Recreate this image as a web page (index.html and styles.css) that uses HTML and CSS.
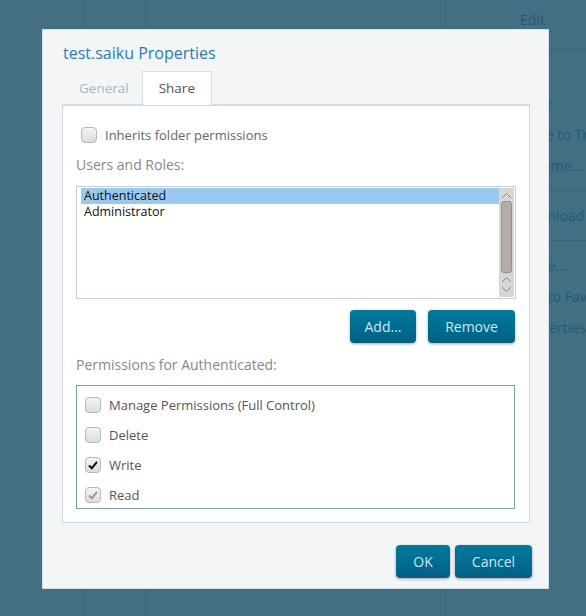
FILE: index.html
```html
<!DOCTYPE html>
<html>
<head>
    <title>test.saiku Properties</title>
    <link rel="stylesheet" href="styles.css">
</head>
<body>
    <div class="app">
        <div class="col col-a"></div>
        <div class="col col-b"></div>
        <div class="col col-c"></div>
        <div class="menu">
            <div class="menu-head">Edit</div>
            <div class="menu-group first">
                <div class="menu-item">Copy</div>
                <div class="menu-item">Move to Trash</div>
                <div class="menu-item">Rename...</div>
            </div>
            <div class="menu-group">
                <div class="menu-item">Download</div>
            </div>
            <div class="menu-group">
                <div class="menu-item">Share...</div>
                <div class="menu-item">Add to Favorites</div>
                <div class="menu-item">Properties</div>
            </div>
        </div>
    </div>

    <div class="dialog">
        <h1 class="title">test.saiku Properties</h1>
        <div class="tabs">
            <div class="tab">General</div>
            <div class="tab active">Share</div>
        </div>
        <div class="panel">
            <label class="check-row inherit">
                <span class="box"></span>Inherits folder permissions
            </label>
            <div class="caption">Users and Roles:</div>
            <div class="listbox">
                <div class="items">
                    <div class="item selected">Authenticated</div>
                    <div class="item">Administrator</div>
                </div>
                <div class="scrollbar">
                    <svg class="arrow" width="11" height="7" viewBox="0 0 11 7"><path d="M1 6 L5.5 1.5 L10 6" fill="none" stroke="#8a8a8a" stroke-width="1"/></svg>
                    <div class="thumb"></div>
                    <svg class="arrow" width="11" height="7" viewBox="0 0 11 7"><path d="M1 6 L5.5 1.5 L10 6" fill="none" stroke="#8a8a8a" stroke-width="1"/></svg>
                    <svg class="arrow" width="11" height="7" viewBox="0 0 11 7"><path d="M1 1 L5.5 5.5 L10 1" fill="none" stroke="#8a8a8a" stroke-width="1"/></svg>
                </div>
            </div>
            <div class="actions">
                <button class="btn btn-add">Add...</button>
                <button class="btn btn-remove">Remove</button>
            </div>
            <div class="caption">Permissions for Authenticated:</div>
            <div class="perms">
                <label class="check-row"><span class="box"></span>Manage Permissions (Full Control)</label>
                <label class="check-row"><span class="box"></span>Delete</label>
                <label class="check-row"><span class="box"><svg width="14" height="14" viewBox="0 0 14 14"><path d="M3 7.5 L5.8 10.2 L11 3.8" fill="none" stroke="#111" stroke-width="2"/></svg></span>Write</label>
                <label class="check-row"><span class="box"><svg width="14" height="14" viewBox="0 0 14 14"><path d="M3 7.5 L5.8 10.2 L11 3.8" fill="none" stroke="#9a9a9a" stroke-width="2"/></svg></span>Read</label>
            </div>
        </div>
        <div class="footer">
            <button class="btn btn-ok">OK</button>
            <button class="btn btn-cancel">Cancel</button>
        </div>
    </div>
</body>
</html>
```

FILE: styles.css
```css
body{
    margin: 0;
    background: #436f82;
    font-family: "Open Sans", "DejaVu Sans", sans-serif;
}
.app{
    display: flex;
    height: 616px;
    overflow: hidden;
}
.col{
    flex: none;
    border-right: 1px solid #3b6679;
}
.col-a{ width: 84px; }
.col-b{ width: 60px; }
.col-c{ width: 299px; }
.menu{
    flex: 1;
    min-width: 0;
    color: #235a78;
    font-size: 14px;
}
.menu-head{
    height: 49px;
    line-height: 40px;
    padding-left: 74px;
    border-bottom: 1px solid #3b6679;
}
.menu-group{
    padding: 9px 0 9px 72px;
    border-bottom: 1px solid #3b6679;
}
.menu-group.first{
    padding-top: 38px;
}
.menu-group:last-child{
    border-bottom: none;
}
.menu-item{
    height: 31px;
    line-height: 31px;
    white-space: nowrap;
}

/* dialog */
.dialog{
    position: absolute;
    left: 42px;
    top: 29px;
    width: 507px;
    height: 560px;
    box-sizing: border-box;
    background: #f3f5f7;
    border: 1px solid #d3e1eb;
    padding: 13px 16px 0 19px;
}
.title{
    margin: 0 0 7px 1px;
    font-size: 16px;
    font-weight: normal;
    line-height: 21px;
    color: #2b7bbf;
}
.tabs{
    display: flex;
    height: 33px;
    border-bottom: 1px solid #cfe0eb;
    margin-right: 2px;
}
.tab{
    padding: 0 16px;
    line-height: 33px;
    font-size: 13.5px;
    color: #a6b8c3;
    border: 1px solid transparent;
    border-bottom: none;
}
.tab:first-child{
    padding-right: 12px;
}
.tab.active{
    background: #fff;
    color: #555;
    border-color: #cfe0eb;
    margin-bottom: -1px;
}
.panel{
    background: #fff;
    border: 1px solid #c9dde9;
    padding: 21px 13px 13px 13px;
    margin-right: 2px;
}
.check-row{
    display: flex;
    align-items: center;
    font-size: 13px;
    color: #666;
}
.box{
    display: flex;
    align-items: center;
    justify-content: center;
    width: 16px;
    height: 16px;
    box-sizing: border-box;
    border: 1px solid #b8b8b8;
    border-radius: 4px;
    background: linear-gradient(#f4f4f4, #dcdcdc);
    margin-right: 8px;
    flex: none;
}
.inherit{
    padding-left: 5px;
    height: 16px;
}
.caption{
    margin-top: 12px;
    font-size: 14px;
    line-height: 19px;
    color: #888;
}
.listbox{
    margin-top: 12px;
    height: 113px;
    box-sizing: border-box;
    border: 1px solid #c4d0d8;
    display: flex;
    padding: 1px 1px 1px 4px;
}
.items{
    flex: 1;
}
.item{
    height: 16px;
    line-height: 16px;
    padding-left: 3px;
    font-size: 12.5px;
    color: #111;
}
.item.selected{
    background: #99c9ef;
}
.scrollbar{
    width: 15px;
    background: #d6d6d6;
    display: flex;
    flex-direction: column;
    align-items: center;
    padding: 3px 0 2px;
    box-sizing: border-box;
}
.arrow{
    flex: none;
    margin: 1px 0 2px;
}
.thumb{
    width: 11px;
    height: 74px;
    box-sizing: border-box;
    border: 1px solid #978f8c;
    border-radius: 3px;
    background: #b3aca9;
    margin-bottom: 2px;
}
.actions{
    display: flex;
    justify-content: flex-end;
    gap: 12px;
    margin-top: 11px;
    padding-right: 1px;
}
.btn{
    height: 33px;
    border: none;
    border-radius: 4px;
    background: linear-gradient(#007a9e, #006184);
    box-shadow: 0 1px 3px rgba(0, 0, 0, 0.35);
    color: #cde7f1;
    font-family: "Open Sans", "DejaVu Sans", sans-serif;
    font-size: 14px;
    padding: 0;
}
.btn-add{ width: 66px; }
.btn-remove{ width: 87px; }
.btn-ok{ width: 54px; }
.btn-cancel{ width: 77px; }
.perms{
    margin-top: 11px;
    height: 124px;
    box-sizing: border-box;
    border: 1px solid #7c9bb5;
    margin-right: 1px;
    padding: 4px 8px;
}
.perms .check-row{
    height: 30px;
    color: #555;
}
.footer{
    display: flex;
    justify-content: flex-end;
    gap: 5px;
    margin-top: 22px;
}
```
